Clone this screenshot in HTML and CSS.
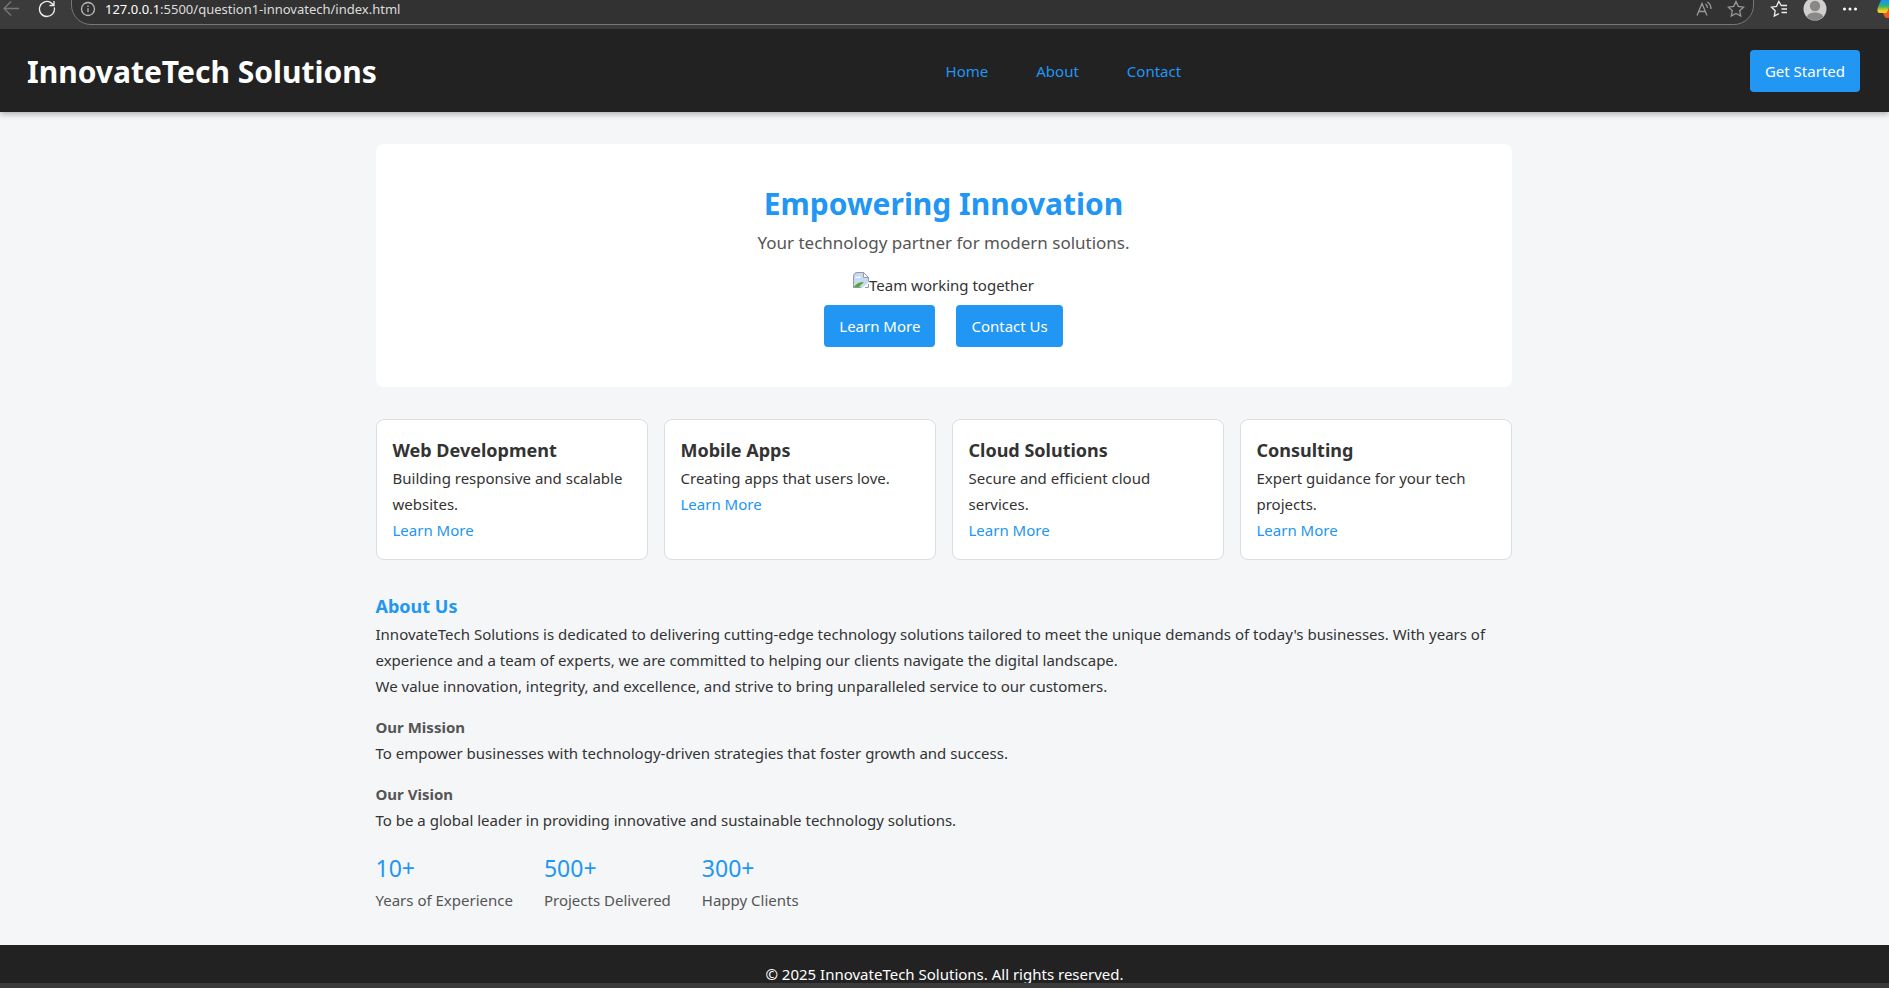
FILE: index.html
```html
<!DOCTYPE html>
<html lang="en">
<head>
<meta charset="utf-8">
<meta name="viewport" content="width=device-width, initial-scale=1">
<title>InnovateTech Solutions</title>
<link rel="stylesheet" href="styles.css">
</head>
<body>
<div class="toolbar">
  <button class="tool-button back" aria-label="Back">
    <svg width="18" height="18" viewBox="0 0 18 18"><path d="M17 8.500H2M9 1.500L2 8.500l7 7"/></svg>
  </button>
  <button class="tool-button reload" aria-label="Reload">
    <svg width="18" height="18" viewBox="0 0 18 18"><path d="M16.300 7.500A7.500 7.500 0 1 1 12.500 2.400L15.800 5M16 1v4.500h-4.500"/></svg>
  </button>
  <div class="address">
    <svg class="info" width="16" height="18" viewBox="0 0 16 18"><circle cx="8" cy="9" r="6.500"/><path d="M8 8.200v3.800M8 5.600v1.300"/></svg>
    <span class="url"><span class="host">127.0.0.1</span>:5500/question1-innovatech/index.html</span>
    <button class="tool-button dim" aria-label="Read aloud">
      <svg width="18" height="18" viewBox="0 0 18 18"><path d="M2 15.500L7 3.500l5 12M4 11.500h6M10.500 4q2 1.500 2 4M12.500 2q3.500 2.500 3.500 7"/></svg>
    </button>
    <button class="tool-button dim" aria-label="Add to favorites">
      <svg width="18" height="18" viewBox="0 0 18 18"><path d="M9 1.500l2.300 4.900 5.300.7-3.900 3.700 1 5.300L9 13.500l-4.700 2.600 1-5.300L1.400 7.100l5.300-.7z"/></svg>
    </button>
  </div>
  <div class="tools">
    <button class="tool-button" aria-label="Favorites">
      <svg width="18" height="18" viewBox="0 0 18 18"><path d="M11.500 6L8.800 1.500 6.500 6.400l-5 .7 3.700 3.700-.9 5.300 4.500-2.500M11.500 5.500H17M11.500 9h5.500M11.500 12.500h5.500"/></svg>
    </button>
    <button class="tool-button" aria-label="Profile">
      <svg class="avatar" width="24" height="24" viewBox="0 0 24 24"><circle class="avatar-back" cx="12" cy="12" r="11.500"/><circle class="avatar-person" cx="12" cy="9" r="5.200"/><path class="avatar-person" d="M4 20c0-6 16-6 16 0a11.500 11.500 0 0 1-16 0z"/></svg>
    </button>
    <button class="tool-button" aria-label="Settings and more">
      <svg class="dots" width="16" height="16" viewBox="0 0 16 16"><circle cx="2.500" cy="8" r="1.500"/><circle cx="8" cy="8" r="1.500"/><circle cx="13.500" cy="8" r="1.500"/></svg>
    </button>
    <button class="tool-button copilot" aria-label="Copilot">
      <svg width="24" height="24" viewBox="0 0 24 24">
        <defs><linearGradient id="sweep" x1="0" y1="0" x2="0" y2="1"><stop offset="0.200" stop-color="#1a94e8"/><stop offset="0.550" stop-color="#35b46c"/><stop offset="0.850" stop-color="#f4ce18"/></linearGradient></defs>
        <path fill="url(#sweep)" d="M5 2h11l-6 15H3c-3 0-3-3-2-6z"/><path fill="#e9592b" d="M6 17h4l2-5h9l-5 10h-6c-2 0-3-2-4-5z"/>
      </svg>
    </button>
  </div>
</div>
<div class="viewport">
  <header class="site-header">
    <h1 class="brand">InnovateTech Solutions</h1>
    <nav class="nav">
      <a href="#home">Home</a>
      <a href="#about">About</a>
      <a href="#contact">Contact</a>
    </nav>
    <button class="button">Get Started</button>
  </header>
  <main class="main">
    <section class="hero" id="home">
      <h2 class="hero-title">Empowering Innovation</h2>
      <p class="hero-text">Your technology partner for modern solutions.</p>
      <div class="picture">
        <svg width="16" height="16" viewBox="0 0 16 16">
          <path fill="#c6d9f7" d="M0 5Q0 0 5 0h5l6 5v5L9 16H0z"/>
          <path fill="#fff" d="M2 6q1-2 2.500-1Q7 3 8 6z"/>
          <path fill="#fff" d="M10 0l6 6h-6z"/>
          <path fill="#53a833" d="M1 15q3-5 10-5l-5 5z"/>
          <path fill="none" stroke="#999" d="M.5 15.500V5Q.5.500 5 .500h5.500l5 5V9M10.500.500v5h5M.5 15.500H8M12 15.500h3.500V12"/>
        </svg><span>Team working together</span>
      </div>
      <div class="hero-actions">
        <button class="button">Learn More</button>
        <button class="button">Contact Us</button>
      </div>
    </section>
    <section class="cards">
      <article class="card"><h3>Web Development</h3><p>Building responsive and scalable websites.</p><a href="#web">Learn More</a></article>
      <article class="card"><h3>Mobile Apps</h3><p>Creating apps that users love.</p><a href="#mobile">Learn More</a></article>
      <article class="card"><h3>Cloud Solutions</h3><p>Secure and efficient cloud services.</p><a href="#cloud">Learn More</a></article>
      <article class="card"><h3>Consulting</h3><p>Expert guidance for your tech projects.</p><a href="#consulting">Learn More</a></article>
    </section>
    <section class="about" id="about">
      <div>
        <h2>About Us</h2>
        <p>InnovateTech Solutions is dedicated to delivering cutting-edge technology solutions tailored to meet the unique demands of today's businesses. With years of experience and a team of experts, we are committed to helping our clients navigate the digital landscape.</p>
        <p>We value innovation, integrity, and excellence, and strive to bring unparalleled service to our customers.</p>
      </div>
      <div>
        <h3>Our Mission</h3>
        <p>To empower businesses with technology-driven strategies that foster growth and success.</p>
      </div>
      <div>
        <h3>Our Vision</h3>
        <p>To be a global leader in providing innovative and sustainable technology solutions.</p>
      </div>
      <div class="stats">
        <div><div class="number">10+</div><div class="label">Years of Experience</div></div>
        <div><div class="number">500+</div><div class="label">Projects Delivered</div></div>
        <div><div class="number">300+</div><div class="label">Happy Clients</div></div>
      </div>
    </section>
  </main>
  <footer class="site-footer" id="contact">© 2025 InnovateTech Solutions. All rights reserved.</footer>
</div>
<div class="window-edge"></div>
</body>
</html>
```
FILE: styles.css
```css
* { box-sizing: border-box; margin: 0; padding: 0; }

body {
  display: flex;
  flex-direction: column;
  height: 100vh;
  overflow: hidden;
  background: #f4f6f8;
  color: #333;
  font-family: "Noto Sans", "Open Sans", sans-serif;
  font-size: 15px;
  line-height: 26px;
}

a { color: #2196f3; text-decoration: none; }
button { font: inherit; border: 0; cursor: pointer; }

/* Browser toolbar */
.toolbar {
  display: flex;
  flex: none;
  height: 29px;
  padding-left: 2px;
  overflow: hidden;
  background: #3b3b3b;
}
.tool-button {
  display: flex;
  height: 18px;
  background: none;
}
.tool-button svg, .info { fill: none; stroke: #eee; stroke-width: 1.3; }
.tool-button.back svg { stroke: #777; }
.tool-button.dim svg { stroke: #999; }
.tool-button.reload { margin: 0 15px 0 18px; }
.address {
  display: flex;
  flex: 1;
  gap: 14px;
  height: 44px;
  margin-top: -19px;
  padding: 18px 8px 0;
  border: 1px solid #777;
  border-radius: 20px;
  background: #323232;
}
.info { flex: none; stroke: #bbb; }
.url {
  flex: 1;
  margin-left: -5px;
  color: #ddd;
  font-size: 13px;
  line-height: 18px;
}
.host { color: #fff; }
.tools {
  display: flex;
  gap: 15px;
  padding-left: 16px;
}
.tool-button .avatar, .tool-button .dots, .tool-button.copilot svg { stroke: none; }
.avatar { margin-top: -3px; }
.avatar-back { fill: #d2d0ce; }
.avatar-person { fill: #8a8886; }
.tool-button .dots { fill: #fff; margin-top: 1px; }
.copilot { width: 16px; padding-left: 4px; overflow: hidden; }
.copilot svg { flex: none; margin-top: -4px; }

/* Page */
.viewport { flex: 1; min-height: 0; overflow: hidden; }
.site-header {
  display: flex;
  align-items: center;
  justify-content: space-between;
  position: relative;
  padding: 16px 29px 16px 27px;
  background: #222;
  box-shadow: 0 2px 6px rgba(0, 0, 0, 0.3);
}
.brand {
  padding-top: 3px;
  color: #fff;
  font-size: 30px;
  line-height: 48px;
}
.nav { display: flex; gap: 48px; }
.button {
  padding: 8px 15px;
  border-radius: 4px;
  background: #2196f3;
  color: #fff;
}
.main {
  display: flex;
  flex-direction: column;
  gap: 32px;
  max-width: 1200px;
  margin: 0 auto;
  padding: 32px 33px 32px 31px;
}
.hero {
  display: flex;
  flex-direction: column;
  align-items: center;
  padding: 35px 32px 40px;
  border-radius: 8px;
  background: #fff;
}
.hero-title {
  color: #2196f3;
  font-size: 30px;
  line-height: 50px;
}
.hero-text {
  margin-bottom: 15px;
  color: #555;
  font-size: 17px;
  line-height: 28px;
}
.picture { display: flex; height: 33px; }
.hero-actions { display: flex; gap: 21px; }

.cards {
  display: grid;
  grid-template-columns: repeat(4, 1fr);
  gap: 16px;
}
.card {
  padding: 16px;
  border: 1px solid #ddd;
  border-radius: 8px;
  background: #fff;
}
.card h3, .about h2 { font-size: 18px; line-height: 29px; }

.about { display: flex; flex-direction: column; gap: 15px; }
.about h2 { color: #2196f3; }
.about h3 { color: #555; font-size: 15px; }
.stats { display: flex; gap: 31px; margin-top: 2px; }
.number {
  color: #2196f3;
  font-size: 23px;
  line-height: 37px;
}
.label { color: #555; }

.site-footer {
  padding: 16px;
  background: #222;
  color: #fff;
  text-align: center;
}
.window-edge { flex: none; height: 5px; background: #3b3b3b; }
```
